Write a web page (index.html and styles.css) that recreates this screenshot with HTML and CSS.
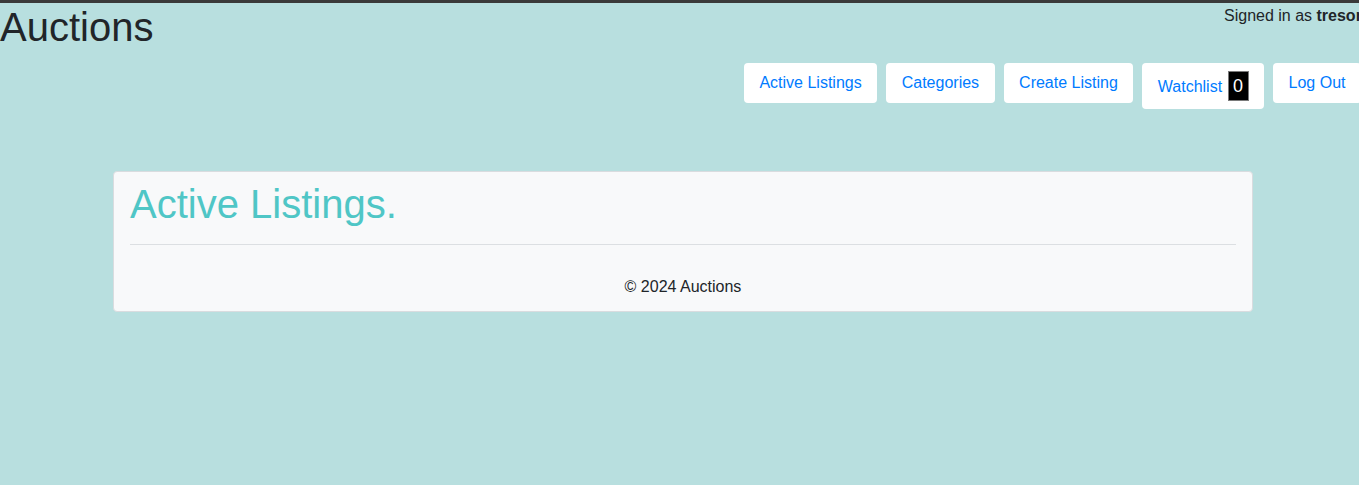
FILE: index.html
```html
<!DOCTYPE html>
<html>
<head>
<meta charset="utf-8">
<title>Auctions</title>
<link rel="stylesheet" href="styles.css">
</head>
<body>
<div class="page">
  <header class="header">
    <h1 class="brand">Auctions</h1>
    <div class="signed">Signed in as <strong>tresor</strong>.</div>
  </header>
  <nav class="nav">
    <a class="nav-link" href="#">Active Listings</a>
    <a class="nav-link" href="#">Categories</a>
    <a class="nav-link" href="#">Create Listing</a>
    <a class="nav-link" href="#">Watchlist <span class="badge">0</span></a>
    <a class="nav-link" href="#">Log Out</a>
  </nav>
  <main class="card">
    <h2 class="title">Active Listings.</h2>
    <hr class="rule">
    <footer class="foot">© 2024 Auctions</footer>
  </main>
</div>
</body>
</html>
```
FILE: styles.css
```css
html, body {
  margin: 0;
  padding: 0;
  overflow: hidden;
}
body {
  background: #b8dfdf;
  border-top: 3px solid #3a3a3a;
  font-family: "Liberation Sans", Arial, sans-serif;
  font-size: 16px;
  line-height: 1.5;
  color: #212529;
  height: 482px;
}
.page {
  width: 1372px;
}
.header {
  display: flex;
  justify-content: space-between;
  align-items: flex-start;
}
.brand {
  margin: 0;
  font-size: 40px;
  font-weight: 400;
  line-height: 1.2;
}
.signed {
  padding-top: 1px;
  font-size: 16px;
  white-space: nowrap;
  width: 148px;
}
.nav {
  display: flex;
  justify-content: flex-end;
  align-items: flex-start;
  gap: 9px;
  margin-top: 12px;
  width: 1361px;
}
.nav-link {
  display: block;
  background: #fff;
  color: #007bff;
  text-decoration: none;
  padding: 8px 15.5px;
  border-radius: 4px;
  white-space: nowrap;
}
.badge {
  display: inline-block;
  background: #000;
  color: #fff;
  border: 1px solid #7a7a7a;
  padding: 1px 4.5px 0;
  font-size: 18px;
  line-height: 27px;
  vertical-align: baseline;
  margin-left: 1px;
}
.card {
  margin: 62px 0 0 113px;
  width: 1106px;
  background: #f8f9fa;
  border: 1px solid #d9dcdf;
  border-radius: 4px;
  padding: 8px 16px 12px;
}
.title {
  margin: 0 0 8px;
  font-size: 40px;
  font-weight: 400;
  line-height: 1.2;
  color: #4fc6c6;
}
.rule {
  margin: 16px 0 0;
  border: 0;
  border-top: 1px solid #dcdfe2;
}
.foot {
  text-align: center;
  padding-top: 30px;
}
```
